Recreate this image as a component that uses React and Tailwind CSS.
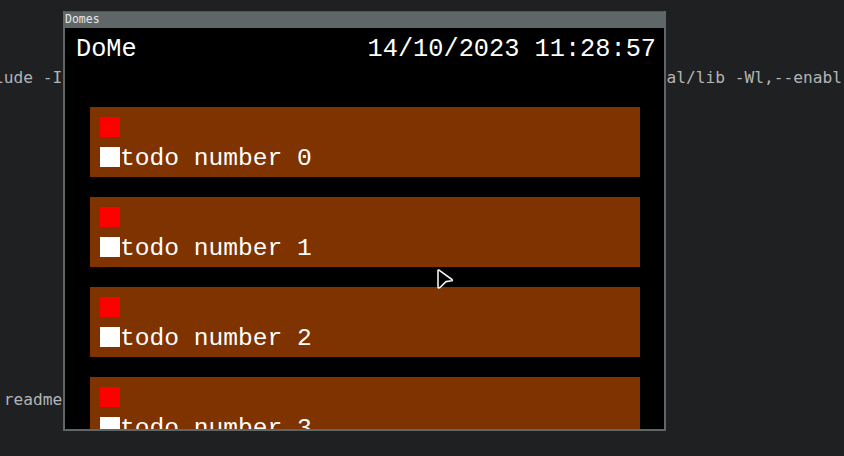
import React from 'react';

const todos = [0, 1, 2, 3, 4];

const TodoCard = ({ n }) => (
  <div className="w-[550px] h-[70px] shrink-0 bg-[#7f3300] p-[10px] flex flex-col gap-[10px]">
    <div className="w-[20px] h-[20px] bg-[#ff0000]" />
    <div className="flex items-start h-[20px]">
      <div className="w-[20px] h-[20px] bg-white shrink-0" />
      <span className="text-[24.6px] leading-[24px] text-white whitespace-pre">todo number {n}</span>
    </div>
  </div>
);

const Cursor = () => (
  <svg className="absolute left-[435px] top-[267px]" width="22" height="24" viewBox="0 0 22 24">
    <path
      d="M3 3.5 Q3 2.5 4 3.2 L17 12.5 Q18 13.3 16.8 13.8 L11 14.6 L5 20.5 Q3 21.5 3 20 Z"
      fill="#000"
      stroke="#f2f2f2"
      strokeWidth="1.6"
      strokeLinejoin="round"
    />
  </svg>
);

const App = () => {
  return (
    <div className="relative w-[844px] h-[456px] overflow-hidden bg-[#1f2022]">
      {/* terminal behind the window */}
      <div className="font-['DejaVu_Sans_Mono',monospace] text-[16.2px] text-[#b3b4b5] pt-[68px]">
        <div className="h-[20px] leading-[20px] whitespace-pre ml-[-6px]">
          lude -I/usr/local/include -O2 -std=c++17 main.cpp -o domes -L/usr/local/lib -Wl,--enabl
        </div>
        <div className="h-[302px]" />
        <div className="h-[20px] leading-[20px] whitespace-pre ml-[-6px]"> readme.md</div>
      </div>

      {/* app window */}
      <div className="absolute left-[63px] top-[11px] w-[603px] h-[420px] bg-[#5f6668] px-[2px] pb-[2px] flex flex-col">
        <div className="h-[17px] shrink-0 border-t border-[#4e5456] font-['DejaVu_Sans_Mono',monospace] text-[11.5px] leading-[15px] text-[#e6e6e6]">
          Domes
        </div>
        <div className="flex-1 bg-black overflow-hidden font-['Liberation_Mono',monospace] text-white">
          <div className="flex justify-between pl-[11px] pr-[8px] pt-[8px] text-[25.3px] leading-[28px]">
            <span>DoMe</span>
            <span className="whitespace-pre">14/10/2023 11:28:57</span>
          </div>
          <div className="mt-[43px] ml-[25px] flex flex-col gap-[20px]">
            {todos.map((n) => (
              <TodoCard key={n} n={n} />
            ))}
          </div>
        </div>
      </div>

      <Cursor />
    </div>
  );
};

export default App;
